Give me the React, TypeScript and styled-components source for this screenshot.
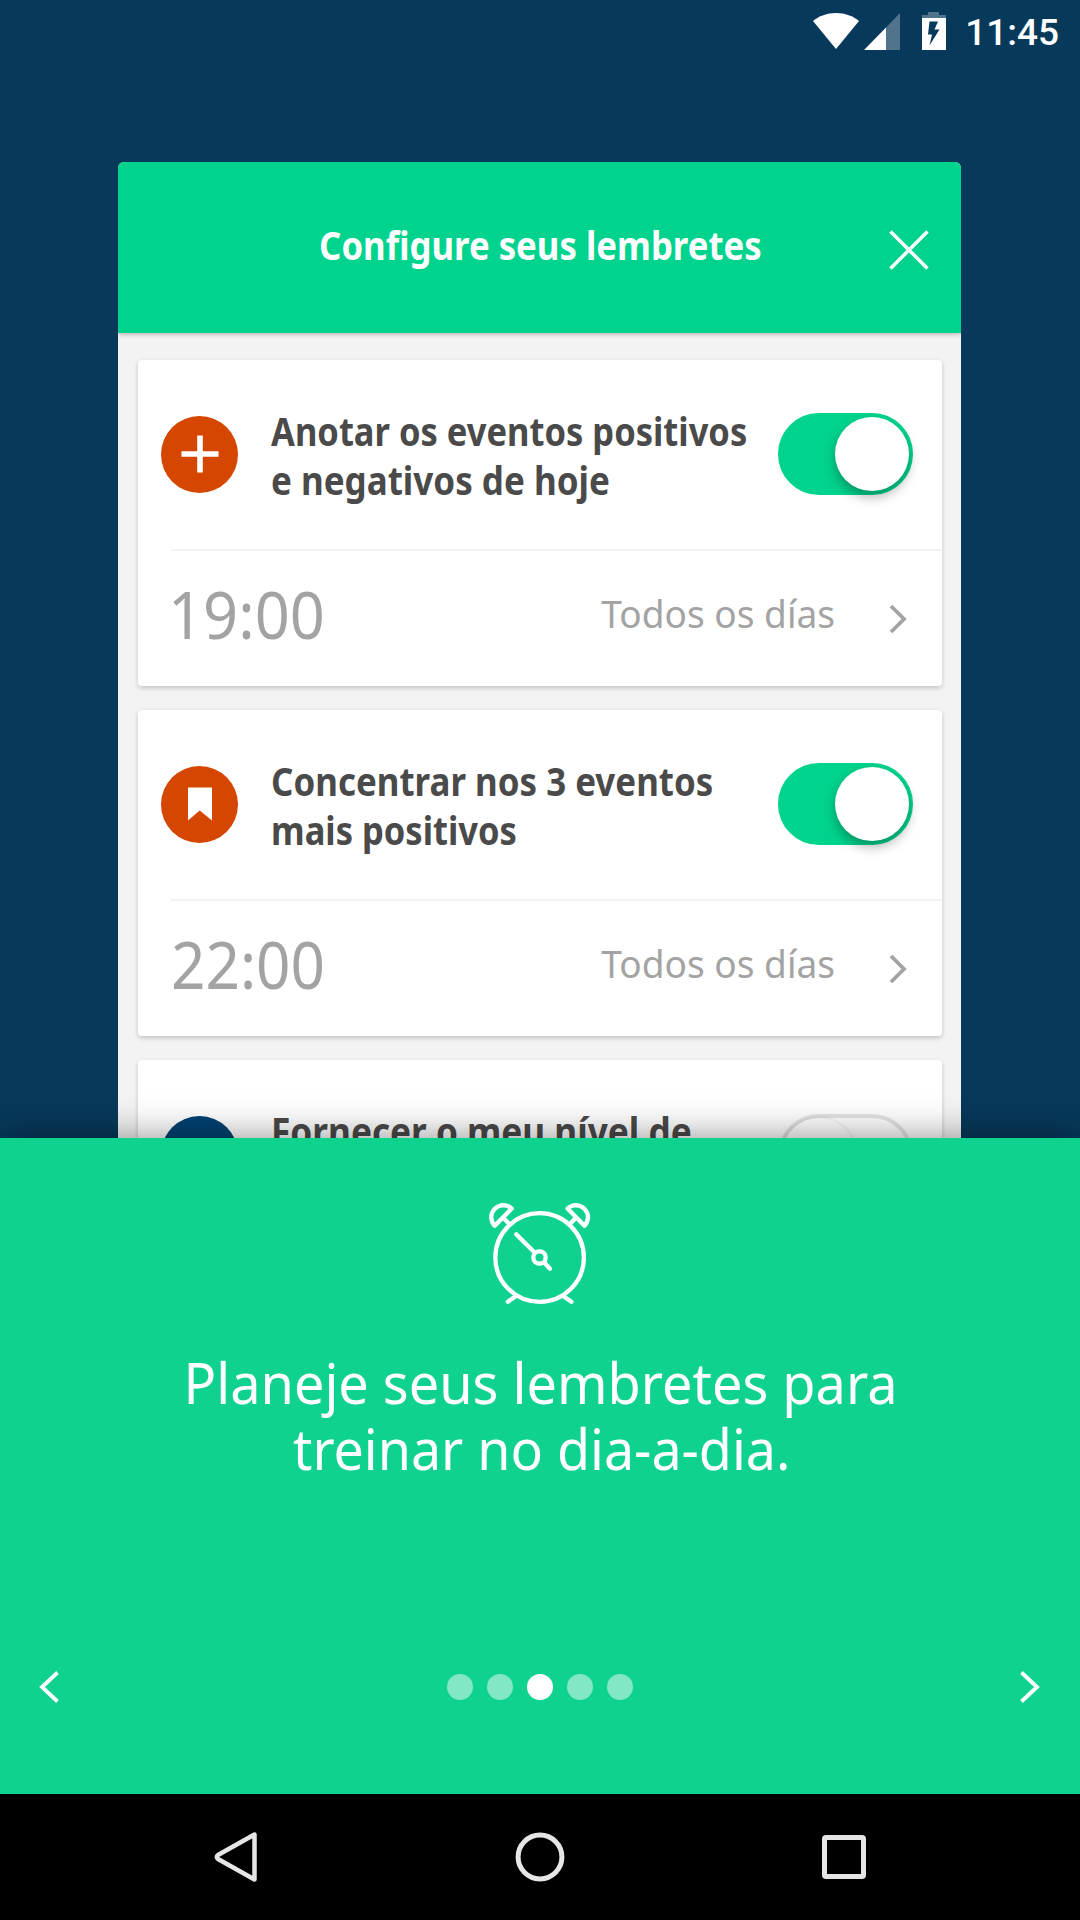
import React from 'react';
import styled, { createGlobalStyle } from 'styled-components';

const GlobalStyle = createGlobalStyle`
  * { box-sizing: border-box; }
  html, body { margin: 0; padding: 0; background: #07395b; }
  svg { display: block; flex: none; }
`;

const Screen = styled.div`
  width: 1080px;
  height: 1920px;
  display: flex;
  flex-direction: column;
  overflow: hidden;
  background: #07395b;
  color: #fff;
  font-family: 'Noto Sans', 'Open Sans', sans-serif;
`;

const Narrow = styled.span<{ $x: number; $from?: string; $indent?: number }>`
  display: inline-block;
  white-space: nowrap;
  margin-left: ${(p) => p.$indent ?? 0}px;
  transform: scaleX(${(p) => p.$x});
  transform-origin: ${(p) => p.$from ?? 'left'} center;
`;

const StatusBar = styled.header`
  flex: none;
  height: 72px;
  padding: 12px 21px 0 813px;
  display: flex;
  align-items: flex-start;
`;

const SignalIcon = styled.svg`
  margin-left: 5px;
`;

const BatteryIcon = styled.svg`
  margin-left: 22px;
`;

const Clock = styled.time`
  margin: -1px 0 0 auto;
  font: 500 37px/44px Roboto, sans-serif;
`;

const Preview = styled.main`
  flex: none;
  height: 1066px;
  padding: 90px 119px 0 118px;
  overflow: hidden;
`;

const Phone = styled.section`
  height: 1000px;
  border-radius: 6px 6px 0 0;
  overflow: hidden;
  background: #f3f3f3;
`;

const PhoneHeader = styled.div`
  position: relative;
  height: 171px;
  padding: 0 32px 5px 73px;
  display: flex;
  align-items: center;
  background: #00d38d;
  box-shadow: 0 1px 5px rgba(0, 0, 0, 0.3);
`;

const PhoneTitle = styled.h1`
  flex: 1;
  margin: 0;
  text-align: center;
  font-size: 39px;
  line-height: 50px;
  font-weight: 700;
`;

const CloseIcon = styled.svg`
  margin-top: 9px;
`;

const CardList = styled.div`
  padding: 27px 19px 0 20px;
  display: flex;
  flex-direction: column;
  gap: 24px;
`;

const Card = styled.article`
  height: 326.2px;
  flex: none;
  border-radius: 4px;
  background: #fff;
  box-shadow: 0 2px 5px rgba(0, 0, 0, 0.2);
`;

const CardTop = styled.div`
  height: 188.5px;
  padding: 0 29px 0 23px;
  display: flex;
  align-items: center;
`;

const Badge = styled.div<{ $color: string }>`
  flex: none;
  width: 77px;
  height: 77px;
  border-radius: 50%;
  display: grid;
  place-items: center;
  background: ${(p) => p.$color};
`;

const CardTitle = styled.h2`
  flex: 1;
  width: 0;
  height: 99px;
  margin: 2px 0 0 32.5px;
  display: flex;
  flex-direction: column;
  align-items: flex-start;
  color: #4a4a4a;
  font-size: 39px;
  line-height: 49.5px;
  font-weight: 700;
`;

const Track = styled.div<{ $on: boolean }>`
  flex: none;
  width: 135px;
  height: 82px;
  border-radius: 41px;
  border: 4px solid ${(p) => (p.$on ? '#00d38d' : '#e4e4e4')};
  background: ${(p) => (p.$on ? '#00d38d' : '#fff')};
  display: flex;
  justify-content: ${(p) => (p.$on ? 'flex-end' : 'flex-start')};
`;

const Knob = styled.div<{ $on: boolean }>`
  width: 74px;
  height: 74px;
  border-radius: 50%;
  background: #fff;
  box-shadow: ${(p) => (p.$on ? '0 6px 12px rgba(0, 0, 0, 0.3)' : '0 1px 4px rgba(0, 0, 0, 0.2)')};
`;

const CardBottom = styled.div`
  height: 137.5px;
  margin-left: 33px;
  padding: 0 35px 11px 0;
  border-top: 2px solid #f3f3f3;
  display: flex;
  align-items: center;
  color: #a3a3a3;
`;

const Time = styled.div`
  font-size: 66px;
  line-height: 80px;
`;

const Frequency = styled.div`
  margin: 1px 0 0 auto;
  font-size: 39px;
  line-height: 50px;
`;

const RowChevron = styled.svg`
  margin: 13px 0 0 54px;
`;

const Panel = styled.section`
  position: relative;
  flex: none;
  height: 656px;
  padding-top: 63px;
  display: flex;
  flex-direction: column;
  align-items: center;
  background: #0fd28f;
  box-shadow: 0 0 36px rgba(0, 0, 0, 0.45);
`;

const Message = styled.p`
  margin: 43px 0 0;
  display: flex;
  flex-direction: column;
  align-items: center;
  font-size: 57px;
  line-height: 65.5px;
`;

const Pager = styled.nav`
  width: 100%;
  height: 32px;
  margin-top: 190px;
  padding: 0 40px 0 39px;
  display: flex;
  align-items: center;
  justify-content: space-between;
`;

const Dots = styled.div`
  display: flex;
  gap: 14px;
`;

const Dot = styled.i<{ $active: boolean }>`
  width: 26px;
  height: 26px;
  border-radius: 50%;
  background: ${(p) => (p.$active ? '#fff' : 'rgba(255, 255, 255, 0.48)')};
`;

const NavBar = styled.footer`
  flex: none;
  height: 126px;
  display: flex;
  justify-content: center;
  background: #000;
`;

const NavButton = styled.div`
  width: 304px;
  display: grid;
  place-items: center;
`;

const PlusIcon = () => (
  <svg width="38" height="38" viewBox="0 0 38 38">
    <path d="M19 .5V37.500M.5 19H37.500" stroke="#fff" strokeWidth="5.600" />
  </svg>
);

const BookmarkIcon = () => (
  <svg width="26" height="34" viewBox="0 0 26 34">
    <path d="M1 .5H25V33.500L12.700 23.500L1 33.500Z" fill="#fff" />
  </svg>
);

const AlarmClock = () => (
  <svg width="104" height="106" viewBox="488 1201 104 106" fill="none" stroke="#fff" strokeWidth="4.300" strokeLinecap="round" strokeLinejoin="round">
    <circle cx="539.600" cy="1257.500" r="44.300" />
    <circle cx="539.500" cy="1257.500" r="6.200" />
    <path d="M516.200 1234.300L534.600 1252.600M544.300 1262.500L550 1268.700" />
    <path d="M511.700 1208.600L494.700 1225.800A13 13.600 -45 0 1 491.200 1217.500A12.500 12.500 0 0 1 503.500 1205.100A13 13 0 0 1 511.700 1208.600Z" />
    <path d="M567.500 1208.600L584.500 1225.800A13 13.600 45 0 0 588 1217.500A12.500 12.500 0 0 0 575.700 1205.100A13 13 0 0 0 567.500 1208.600Z" />
    <path d="M503.500 1218L509.300 1224M575.700 1218L569.900 1224" />
    <path d="M507.800 1301.700L516 1296M571.400 1301.700L563.200 1296" />
  </svg>
);

type Line = { text: string; x: number; indent?: number };
type Reminder = {
  lines: Line[];
  color: string;
  icon?: React.ReactNode;
  on: boolean;
  time?: Line;
};

const reminders: Reminder[] = [
  {
    lines: [
      { text: 'Anotar os eventos positivos', x: 0.885 },
      { text: 'e negativos de hoje', x: 0.897 },
    ],
    color: '#d54600',
    icon: <PlusIcon />,
    on: true,
    time: { text: '19:00', x: 0.93, indent: -3.5 },
  },
  {
    lines: [
      { text: 'Concentrar nos 3 eventos', x: 0.895 },
      { text: 'mais positivos', x: 0.885 },
    ],
    color: '#d54600',
    icon: <BookmarkIcon />,
    on: true,
    time: { text: '22:00', x: 0.913 },
  },
  {
    lines: [{ text: 'Fornecer o meu nível de', x: 0.902 }],
    color: '#004272',
    on: false,
  },
];

const ReminderCard = ({ lines, color, icon, on, time }: Reminder) => (
  <Card>
    <CardTop>
      <Badge $color={color}>{icon}</Badge>
      <CardTitle>
        {lines.map((l) => (
          <Narrow key={l.text} $x={l.x}>{l.text}</Narrow>
        ))}
      </CardTitle>
      <Track $on={on}>
        <Knob $on={on} />
      </Track>
    </CardTop>
    {time && (
      <CardBottom>
        <Time>
          <Narrow $x={time.x} $indent={time.indent}>{time.text}</Narrow>
        </Time>
        <Frequency>
          <Narrow $x={0.95} $from="right">Todos os días</Narrow>
        </Frequency>
        <RowChevron width="18" height="30" viewBox="0 0 18 30">
          <path d="M2 2L15 15L2 28" fill="none" stroke="#a3a3a3" strokeWidth="3.800" />
        </RowChevron>
      </CardBottom>
    )}
  </Card>
);

export default function App() {
  return (
    <Screen>
      <GlobalStyle />
      <StatusBar>
        <svg width="46" height="38" viewBox="0 0 46 38" fill="#fff">
          <path d="M0 9C6 4 14 1 23 1S40 4 46 9L23 37Z" />
        </svg>
        <SignalIcon width="36" height="38" viewBox="0 0 36 38" fill="#fff">
          <path d="M36 1V38H22V15.500Z" opacity=".3" />
          <path d="M0 38L22 15.500V38Z" />
        </SignalIcon>
        <BatteryIcon width="24" height="38" viewBox="0 0 24 38" fill="#fff">
          <path d="M6 0H17V3H24V6H0V3H6Z" opacity=".3" />
          <path fillRule="evenodd" d="M0 6H24V38H0ZM7.500 9.500L6 22.500H10L7.500 33.500L17.500 17.500H12.500L16 9.500Z" />
        </BatteryIcon>
        <Clock>11:45</Clock>
      </StatusBar>

      <Preview>
        <Phone>
          <PhoneHeader>
            <PhoneTitle>
              <Narrow $x={0.891} $from="center">Configure seus lembretes</Narrow>
            </PhoneTitle>
            <CloseIcon width="40" height="40" viewBox="0 0 40 40">
              <path d="M1.500 1.500L38.500 38.500M38.500 1.500L1.500 38.500" stroke="#fff" strokeWidth="3.500" />
            </CloseIcon>
          </PhoneHeader>
          <CardList>
            {reminders.map((r) => (
              <ReminderCard key={r.lines[0].text} {...r} />
            ))}
          </CardList>
        </Phone>
      </Preview>

      <Panel>
        <AlarmClock />
        <Message>
          <Narrow $x={0.948} $from="center" $indent={2}>Planeje seus lembretes para</Narrow>
          <Narrow $x={0.943} $from="center" $indent={4}>treinar no dia-a-dia.</Narrow>
        </Message>
        <Pager>
          <svg width="21" height="32" viewBox="0 0 21 32">
            <path d="M18.500 1.500L3 16L18.500 30.500" fill="none" stroke="#fff" strokeWidth="3.800" />
          </svg>
          <Dots>
            {[0, 1, 2, 3, 4].map((i) => (
              <Dot key={i} $active={i === 2} />
            ))}
          </Dots>
          <svg width="21" height="32" viewBox="0 0 21 32">
            <path d="M2.500 1.500L18 16L2.500 30.500" fill="none" stroke="#fff" strokeWidth="3.800" />
          </svg>
        </Pager>
      </Panel>

      <NavBar>
        <NavButton>
          <svg width="44" height="52" viewBox="0 0 44 52">
            <path d="M40.500 3.500V48.500L4 28Q1.500 26 4 24Z" fill="none" stroke="#e6e6e6" strokeWidth="4.500" strokeLinejoin="round" />
          </svg>
        </NavButton>
        <NavButton>
          <svg width="50" height="50" viewBox="0 0 50 50">
            <circle cx="25" cy="25" r="21.900" fill="none" stroke="#e6e6e6" strokeWidth="5" />
          </svg>
        </NavButton>
        <NavButton>
          <svg width="44" height="44" viewBox="0 0 44 44">
            <rect x="2.500" y="2.500" width="39" height="39" rx="1.500" fill="none" stroke="#e6e6e6" strokeWidth="5" />
          </svg>
        </NavButton>
      </NavBar>
    </Screen>
  );
}
